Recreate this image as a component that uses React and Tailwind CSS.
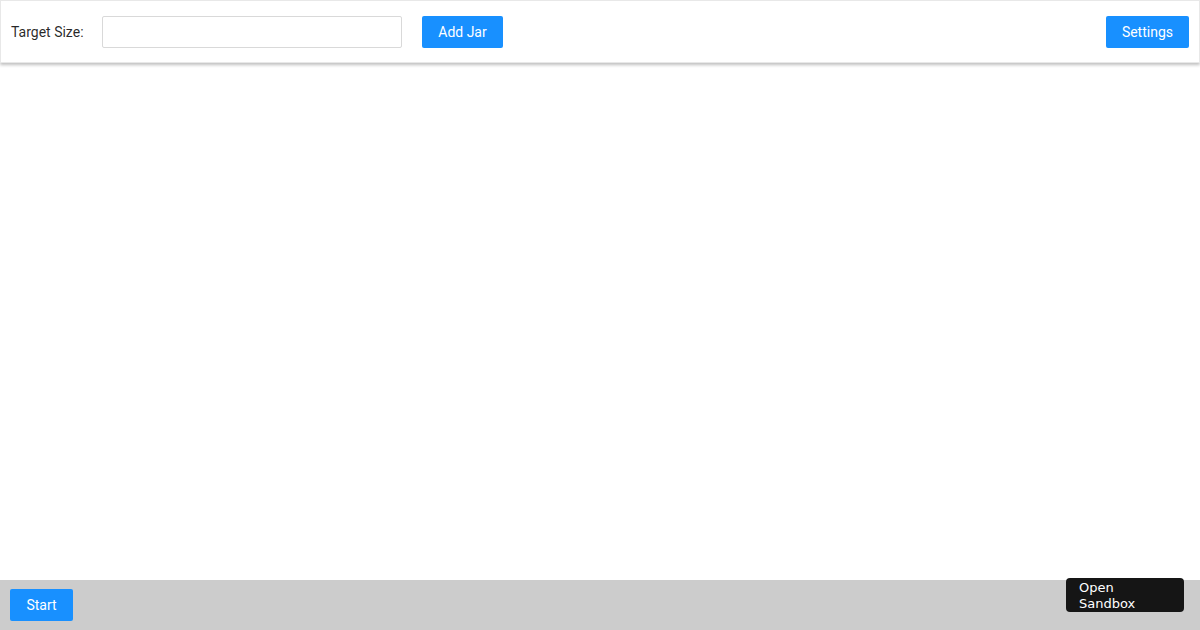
export default function App() {
  return (
    <div className="relative flex h-[630px] flex-col bg-white font-['Roboto',sans-serif] text-sm text-[rgba(0,0,0,0.85)] antialiased">
      <header className="flex h-[63px] items-center border border-[#e8e8e8] pl-[10px] pr-[10px] shadow-[0_2px_3px_rgba(0,0,0,0.25)]">
        <span className="w-[91px]">Target Size:</span>
        <input className="h-8 w-[300px] rounded-[2px] border border-[#d9d9d9] px-3 outline-none" />
        <button className="ml-5 h-8 w-[81px] rounded-[2px] bg-[#1890ff] text-white">Add Jar</button>
        <div className="flex-1" />
        <button className="h-8 rounded-[2px] bg-[#1890ff] px-4 text-white">Settings</button>
      </header>
      <main className="flex-1" />
      <footer className="flex h-[50px] items-center bg-[#cccccc] px-[10px]">
        <button className="h-8 w-[63px] rounded-[2px] bg-[#1890ff] text-white">Start</button>
      </footer>
      <div className="absolute bottom-[18px] right-4 h-[34px] w-[118px] rounded-[4px] bg-[#151515] pl-[13px] pt-[2px] font-['DejaVu_Sans',sans-serif] text-[13px] leading-[16px] text-white">
        Open
        <br />
        Sandbox
      </div>
    </div>
  );
}
